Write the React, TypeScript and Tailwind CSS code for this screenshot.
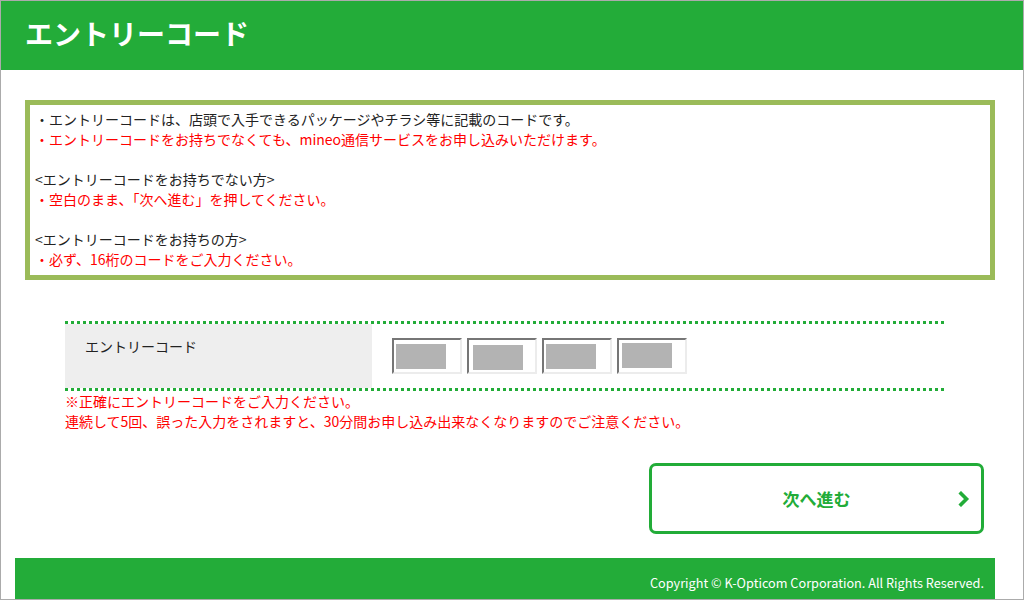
const infoLines: { text: string; red?: boolean }[] = [
  { text: "・エントリーコードは、店頭で入手できるパッケージやチラシ等に記載のコードです。" },
  { text: "・エントリーコードをお持ちでなくても、mineo通信サービスをお申し込みいただけます。", red: true },
  { text: "" },
  { text: "<エントリーコードをお持ちでない方>" },
  { text: "・空白のまま、「次へ進む」を押してください。", red: true },
  { text: "" },
  { text: "<エントリーコードをお持ちの方>" },
  { text: "・必ず、16桁のコードをご入力ください。", red: true },
];

const fills = ["mt-[4px] ml-[2px]", "mt-[5px] ml-[4px]", "mt-[4px] ml-[2px]", "mt-[3px] ml-[3px]"];

const Dotted = () => (
  <div className="h-[3px] w-full bg-[repeating-linear-gradient(90deg,#22ac38_0_3px,transparent_3px_6px)]" />
);

const App = () => {
  return (
    <div className="h-[600px] w-[1024px] overflow-hidden border border-[#ababab] bg-white font-['Noto_Sans_CJK_JP',sans-serif] text-[14px] leading-[20px] text-[#222]">
      <header className="h-[69px] bg-[#23ac39] pl-[24px] pt-[12px]">
        <h1 className="text-[28px] font-bold leading-[40px] text-white">エントリーコード</h1>
      </header>

      <main className="ml-[14px] w-[980px]">
        <div className="ml-[10px] mt-[30px] border-[5px] border-[#9bbb59] pb-[6px] pl-[5px] pt-[4px]">
          {infoLines.map((line, i) => (
            <p key={i} className={line.red ? "h-[20px] text-[#ff0000]" : "h-[20px]"}>
              {line.text}
            </p>
          ))}
        </div>

        <section className="mx-[50px] mt-[41px]">
          <Dotted />
          <div className="flex h-[64px]">
            <div className="w-[307px] bg-[#eeeeee] px-[20px] pt-[12px]">エントリーコード</div>
            <div className="flex gap-[5px] pl-[20px] pt-[14px]">
              {fills.map((f, i) => (
                <div
                  key={i}
                  className="h-[36px] w-[70px] border-2 border-b-[#ececec] border-l-[#767676] border-r-[#ececec] border-t-[#767676] bg-white"
                >
                  <div className={`h-[25px] w-[50px] bg-[#b3b3b3] ${f}`} />
                </div>
              ))}
            </div>
          </div>
          <Dotted />
          <p className="text-[#ff0000]">※正確にエントリーコードをご入力ください。</p>
          <p className="text-[#ff0000]">
            連続して5回、誤った入力をされますと、30分間お申し込み出来なくなりますのでご注意ください。
          </p>
        </section>

        <div className="mt-[32px] flex justify-end pr-[11px]">
          <button className="relative flex h-[71px] w-[335px] items-center justify-center rounded-[7px] border-[3px] border-[#22ac38] bg-white text-[17px] font-bold text-[#22ac38]">
            次へ進む
            <svg
              className="absolute right-[11px] top-1/2 -translate-y-1/2"
              width="12"
              height="16"
              viewBox="0 0 12 16"
              fill="none"
            >
              <path d="M3 2.5 L8.5 8 L3 13.5" stroke="#22ac38" strokeWidth="3.6" strokeLinecap="square" />
            </svg>
          </button>
        </div>

        <footer className="mt-[24px] flex h-[50px] items-center justify-end bg-[#23ac39] pr-[11px] text-[12.7px] text-white">
          Copyright © K-Opticom Corporation. All Rights Reserved.
        </footer>
      </main>
    </div>
  );
};

export default App;
